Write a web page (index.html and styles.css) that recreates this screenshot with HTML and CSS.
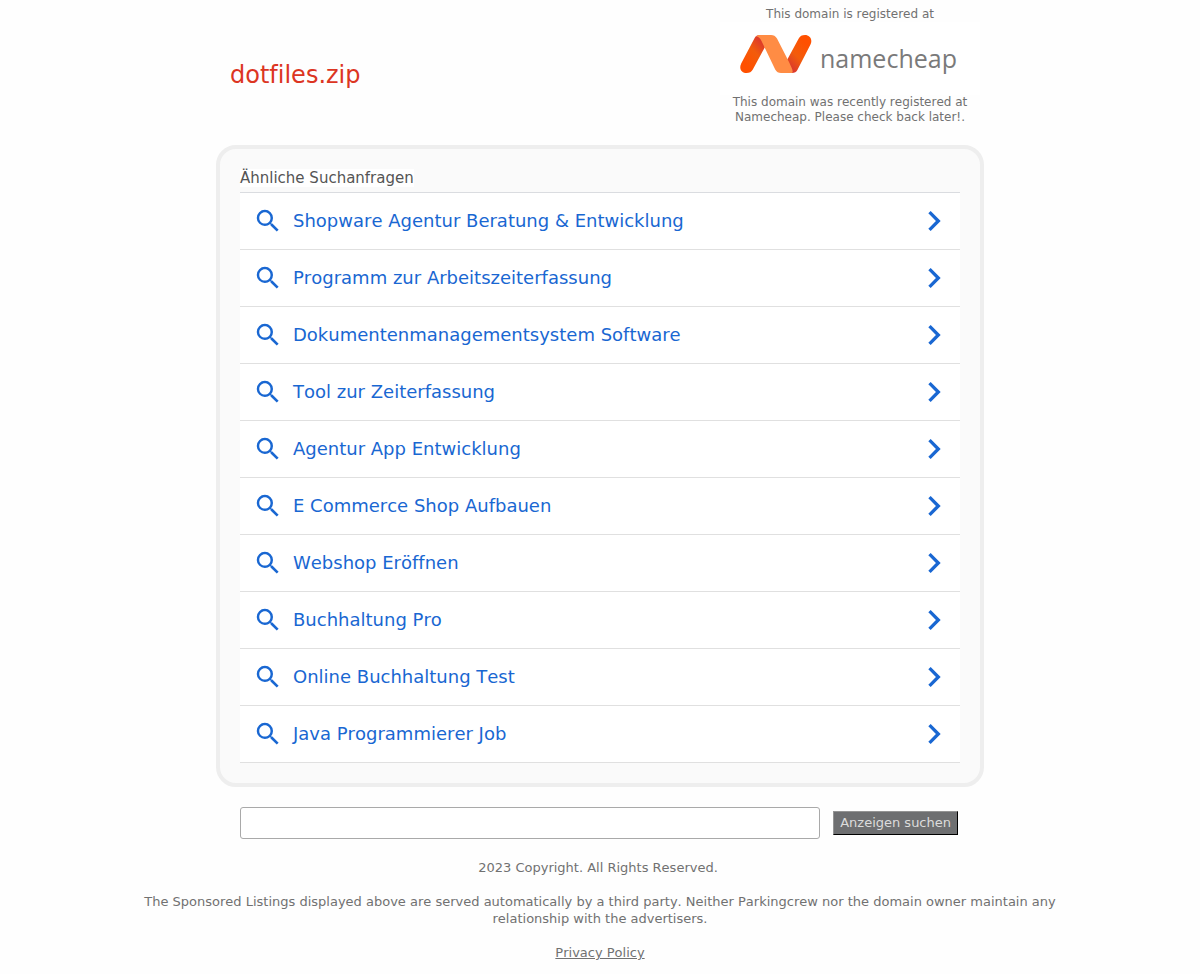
FILE: index.html
```html
<!DOCTYPE html>
<html lang="de">
<head>
<meta charset="utf-8">
<meta name="viewport" content="width=device-width, initial-scale=1">
<title>dotfiles.zip</title>
<link rel="stylesheet" href="styles.css">
</head>
<body>
<svg class="sprite" aria-hidden="true">
  <symbol id="search" viewBox="0 0 24 24"><path d="M15.5 14h-.79l-.28-.27A6.471 6.471 0 0 0 16 9.5 6.5 6.5 0 1 0 9.5 16c1.61 0 3.09-.59 4.23-1.57l.27.28v.79l5 4.99L20.49 19l-4.99-5zm-6 0C7.01 14 5 11.99 5 9.5S7.01 5 9.5 5 14 7.01 14 9.5 11.99 14 9.5 14z"/></symbol>
  <symbol id="chevron" viewBox="0 0 24 24"><path d="M10 6L8.590 7.410 13.170 12l-4.580 4.590L10 18l6-6z"/></symbol>
</svg>
<header class="header">
  <h1 class="domain">dotfiles.zip</h1>
  <div class="registrar">
    <p class="registrar-text">This domain is registered at</p>
    <a class="logo" href="#">
      <svg class="logo-mark" viewBox="0 0 72 38" aria-hidden="true">
        <defs>
          <linearGradient id="left" x1="0" y1="1" x2="0.7" y2="0"><stop offset="0.25" stop-color="#ff5000"/><stop offset="0.65" stop-color="#f25c0c"/><stop offset="1" stop-color="#d9362f"/></linearGradient>
          <linearGradient id="right" x1="1" y1="0" x2="0.3" y2="1"><stop offset="0.25" stop-color="#ff5000"/><stop offset="0.65" stop-color="#f25c0c"/><stop offset="1" stop-color="#d9362f"/></linearGradient>
        </defs>
        <path fill="url(#left)" d="M20 0C17.500 0 15.500 1 14.500 3.200L1.200 28.500C-1.500 34 2 38 6.500 38C9.500 38 11.500 37 12.800 34.500L25 12Z"/>
        <path fill="url(#right)" d="M52 38C54.500 38 56.500 37 57.500 34.800L70.500 9.500C73 4 69.500 0 65 0C62 0 60 1 58.700 3.500L46.500 26Z"/>
        <path fill="#ff8c44" d="M19.500 0H31C33.500 0 35.500 1 37 3.500L49.500 28C51 31.500 54 36.500 52 38H41C38.500 38 36.500 37 35.200 34.500L21.500 6C20 3 18.500 1.500 16 1.500C17 .6 18 0 19.500 0Z"/>
      </svg>
      <span class="logo-name">namecheap</span>
    </a>
    <p class="registrar-text">This domain was recently registered at Namecheap. Please check back later!.</p>
  </div>
</header>
<main class="main">
  <section class="panel">
    <h2 class="panel-title"><span class="panel-label">Ähnliche Suchanfragen</span></h2>
    <nav class="list" aria-label="Ähnliche Suchanfragen">
      <a class="item" href="#"><svg class="icon-search"><use href="#search"/></svg><span class="item-text">Shopware Agentur Beratung &amp; Entwicklung</span><svg class="icon-chevron"><use href="#chevron"/></svg></a>
      <a class="item" href="#"><svg class="icon-search"><use href="#search"/></svg><span class="item-text">Programm zur Arbeitszeiterfassung</span><svg class="icon-chevron"><use href="#chevron"/></svg></a>
      <a class="item" href="#"><svg class="icon-search"><use href="#search"/></svg><span class="item-text">Dokumentenmanagementsystem Software</span><svg class="icon-chevron"><use href="#chevron"/></svg></a>
      <a class="item" href="#"><svg class="icon-search"><use href="#search"/></svg><span class="item-text">Tool zur Zeiterfassung</span><svg class="icon-chevron"><use href="#chevron"/></svg></a>
      <a class="item" href="#"><svg class="icon-search"><use href="#search"/></svg><span class="item-text">Agentur App Entwicklung</span><svg class="icon-chevron"><use href="#chevron"/></svg></a>
      <a class="item" href="#"><svg class="icon-search"><use href="#search"/></svg><span class="item-text">E Commerce Shop Aufbauen</span><svg class="icon-chevron"><use href="#chevron"/></svg></a>
      <a class="item" href="#"><svg class="icon-search"><use href="#search"/></svg><span class="item-text">Webshop Eröffnen</span><svg class="icon-chevron"><use href="#chevron"/></svg></a>
      <a class="item" href="#"><svg class="icon-search"><use href="#search"/></svg><span class="item-text">Buchhaltung Pro</span><svg class="icon-chevron"><use href="#chevron"/></svg></a>
      <a class="item" href="#"><svg class="icon-search"><use href="#search"/></svg><span class="item-text">Online Buchhaltung Test</span><svg class="icon-chevron"><use href="#chevron"/></svg></a>
      <a class="item" href="#"><svg class="icon-search"><use href="#search"/></svg><span class="item-text">Java Programmierer Job</span><svg class="icon-chevron"><use href="#chevron"/></svg></a>
    </nav>
  </section>
  <form class="search">
    <input class="search-input" type="text" name="q" aria-label="Anzeigen suchen">
    <button class="search-button" type="submit">Anzeigen suchen</button>
  </form>
</main>
<footer class="footer">
  <p class="copyright">2023 Copyright. All Rights Reserved.</p>
  <p class="notice">The Sponsored Listings displayed above are served automatically by a third party. Neither Parkingcrew nor the domain owner maintain any relationship with the advertisers.</p>
  <p class="notice"><a class="privacy" href="#">Privacy Policy</a></p>
</footer>
</body>
</html>
```

FILE: styles.css
```css
* {
  box-sizing: border-box;
}

body {
  margin: 0;
  background: #fefefe;
  color: #717171;
  font-family: "DejaVu Sans", sans-serif;
  font-size: 13px;
  line-height: 17px;
  font-kerning: none;
  font-variant-ligatures: none;
}

h1, h2, p {
  margin: 0;
  font-weight: normal;
}

.sprite {
  display: none;
}

.header {
  display: flex;
  align-items: center;
  justify-content: space-between;
  max-width: 768px;
  margin: 0 auto;
  padding: 7px 4px 20px 14px;
}

.domain {
  color: #dc3522;
  font-size: 24px;
  line-height: 28px;
  padding-top: 18px;
}

.registrar {
  width: 260px;
  text-align: center;
}

.registrar-text {
  padding: 0 10px;
  font-size: 12px;
  line-height: 15px;
}

.logo {
  display: flex;
  align-items: center;
  gap: 8px;
  padding: 13px 20px 22px;
  background: #fff;
  text-decoration: none;
}

.logo-mark {
  flex: none;
  width: 72px;
  height: 38px;
}

.logo-name {
  color: #7a7a7a;
  font-family: "Open Sans", sans-serif;
  font-size: 25px;
  font-weight: 400;
  line-height: 38px;
  padding-top: 4px;
  margin-bottom: -4px;
}

.main {
  max-width: 768px;
  margin: 0 auto;
}

.panel {
  padding: 20px;
  border: 4px solid #eee;
  border-radius: 20px;
  background: #fafafa;
}

.panel-title {
  padding-bottom: 5px;
  color: #555;
  font-size: 15px;
  line-height: 18px;
}

.panel-label {
  background: #fff;
}

.list {
  border-top: 1px solid #dadce0;
  background: #fff;
}

.item {
  display: flex;
  align-items: center;
  height: 57px;
  padding: 0 6px 0 13px;
  border-bottom: 1px solid #e0e0e0;
  color: #1967d2;
  font-size: 18px;
  line-height: 24px;
  text-decoration: none;
}

.item-text {
  flex: 1;
  padding-left: 10px;
}

.icon-search,
.icon-chevron {
  flex: none;
  fill: currentColor;
}

.icon-search {
  width: 30px;
  height: 30px;
}

.icon-chevron {
  width: 40px;
  height: 40px;
}

.search {
  display: flex;
  align-items: center;
  gap: 13px;
  padding: 20px 26px 20px 24px;
}

.search-input {
  flex: 1;
  min-width: 0;
  height: 32px;
  padding: 4px 8px;
  border: 1px solid #a9a9a9;
  border-radius: 3px;
  background: #fff;
  font: inherit;
}

.search-button {
  height: 24px;
  padding: 0 6px 1px;
  border: 1px solid;
  border-color: #949494 #000 #000 #949494;
  background: #6e6f71;
  color: #dcdcdc;
  font: inherit;
}

.footer {
  max-width: 960px;
  margin: 0 auto;
  padding: 0 20px;
  text-align: center;
}

.copyright {
  padding-right: 4px;
}

.notice {
  margin-top: 17px;
}

.privacy {
  color: inherit;
}
```
